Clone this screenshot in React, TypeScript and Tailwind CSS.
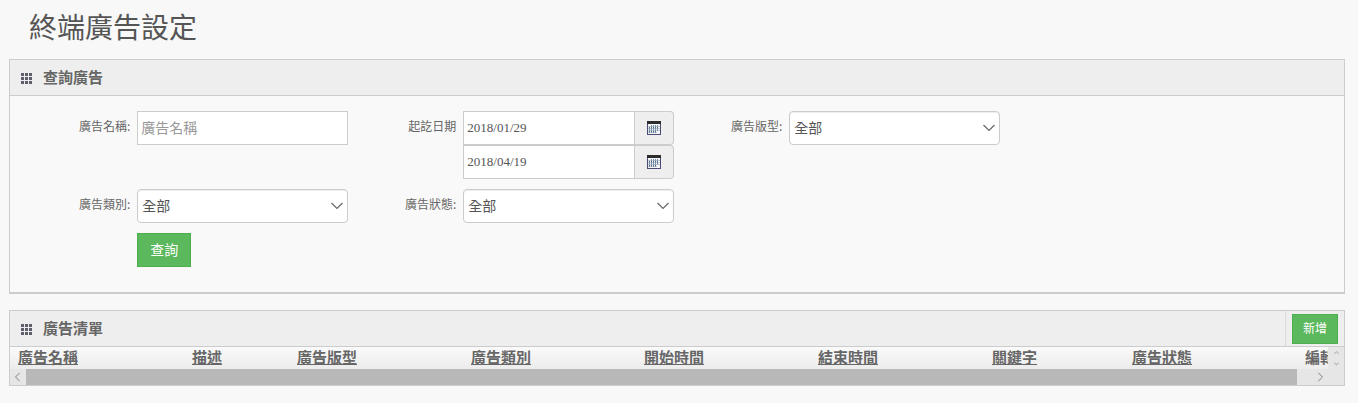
import type { ReactNode } from "react";

const columns = [
  { label: "廣告名稱", width: "w-[174px]", sortable: true },
  { label: "描述", width: "w-[105px]", sortable: true },
  { label: "廣告版型", width: "w-[174px]", sortable: true },
  { label: "廣告類別", width: "w-[173px]", sortable: true },
  { label: "開始時間", width: "w-[174px]", sortable: true },
  { label: "結束時間", width: "w-[174px]", sortable: true },
  { label: "關鍵字", width: "w-[140px]", sortable: true },
  { label: "廣告狀態", width: "w-[173px]", sortable: true },
  { label: "編輯", width: "w-[47px]", sortable: false },
];

function GridIcon() {
  return (
    <svg width="12" height="12" viewBox="0 0 12 12" shapeRendering="crispEdges" aria-hidden="true">
      {[1, 5, 9].map((y) =>
        [0, 4, 8].map((x) => <rect key={`${x}-${y}`} x={x} y={y} width="3" height="3" fill="#5f5f6b" />)
      )}
    </svg>
  );
}

function CalendarIcon() {
  return (
    <svg width="14" height="14" viewBox="0 0 14 14" shapeRendering="crispEdges" aria-hidden="true">
      <rect width="14" height="14" fill="#4b4b78" />
      <rect width="14" height="3" fill="#2b2b2b" />
      <rect x="1" y="3" width="12" height="10" fill="#f4f6f8" />
      {[4, 6, 8, 10].map((y) =>
        [2, 4, 6, 8, 10].map((x) =>
          (y === 4 && x === 2) || (y === 10 && x === 10) ? null : (
            <rect key={`${x}-${y}`} x={x} y={y} width="1" height="2" fill={y % 4 === 0 ? "#6f8fb0" : "#54677f"} />
          )
        )
      )}
      <path d="M1 5.5h12M1 7.5h12M1 9.5h12M1 11.5h9" stroke="#9aa9ba" strokeWidth="1" opacity="0.6" />
    </svg>
  );
}

function Chevron({ className, d, size = 12 }: { className?: string; d: string; size?: number }) {
  return (
    <svg
      className={className}
      width={size}
      height={size}
      viewBox="0 0 12 12"
      fill="none"
      stroke="currentColor"
      strokeWidth={size < 8 ? 3 : 1.2}
      aria-hidden="true"
    >
      <path d={d} />
    </svg>
  );
}

function Panel({ title, action, children, className }: { title: string; action?: ReactNode; children: ReactNode; className: string }) {
  return (
    <section className={`border border-[#cccccc] bg-[#f9f9f9] ${className}`}>
      <div className="flex h-9 items-stretch justify-between border-b border-[#cccccc] bg-[#eeeeee]">
        <div className="flex items-center gap-[10px] pl-[11px]">
          <GridIcon />
          <h2 className="pb-[2px] text-[15px] leading-5 font-bold text-[#666666]">{title}</h2>
        </div>
        {action}
      </div>
      {children}
    </section>
  );
}

function Field({ id, label, children }: { id: string; label: string; children: ReactNode }) {
  return (
    <div className="grid grid-cols-[1fr_2fr] gap-[7px] pr-[3px]">
      <label htmlFor={id} className="pt-[6px] text-right text-xs leading-[18px] whitespace-nowrap">
        {label}
      </label>
      <div>{children}</div>
    </div>
  );
}

function SelectAll({ id }: { id: string }) {
  return (
    <div className="relative">
      <select
        id={id}
        className="h-[34px] w-full appearance-none rounded-[4px] border border-[#cccccc] bg-white px-1 pb-[2px] text-sm text-[#555555] shadow-[inset_0_1px_1px_rgba(0,0,0,0.075)]"
      >
        <option>全部</option>
      </select>
      <Chevron className="pointer-events-none absolute top-[11px] right-[5px]" d="M.5 3L6 8.5 11.5 3" />
    </div>
  );
}

function DateInput({ id, label, value }: { id: string; label: string; value: string }) {
  return (
    <div className="flex h-[34px]">
      <input
        id={id}
        type="text"
        aria-label={label}
        defaultValue={value}
        className="w-full min-w-0 flex-1 border border-[#cccccc] bg-white px-[3px] font-['Liberation_Serif','Noto_Sans_CJK_TC',serif] text-[13px] text-[#555555]"
      />
      <button
        type="button"
        aria-label={label}
        className="flex w-[39px] items-center justify-center rounded-r-[4px] border border-l-0 border-[#cccccc] bg-[#eeeeee]"
      >
        <CalendarIcon />
      </button>
    </div>
  );
}

export default function App() {
  return (
    <main className="min-h-screen bg-[#f8f8f8] pr-[13px] pb-4 pl-[9px] font-['Noto_Sans_CJK_TC',sans-serif] text-[#666666]">
      <h1 className="pt-[6px] pb-[13px] pl-5 text-[28px] leading-10 font-normal text-[#555555]">終端廣告設定</h1>

      <Panel title="查詢廣告" className="border-b-2">
        <form className="px-[15px] pt-[15px] pb-[25px]">
          <div className="grid grid-cols-4 gap-y-[10px]">
            <Field id="ad-name" label="廣告名稱:">
              <input
                id="ad-name"
                type="text"
                placeholder="廣告名稱"
                className="h-[34px] w-full border border-[#cccccc] bg-white px-[3px] pb-[2px] text-sm text-[#555555] placeholder:text-[#999999]"
              />
            </Field>
            <Field id="date-start" label="起訖日期">
              <DateInput id="date-start" label="起始日期" value="2018/01/29" />
              <DateInput id="date-end" label="結束日期" value="2018/04/19" />
            </Field>
            <Field id="ad-layout" label="廣告版型:">
              <SelectAll id="ad-layout" />
            </Field>
            <div />
            <Field id="ad-type" label="廣告類別:">
              <SelectAll id="ad-type" />
            </Field>
            <Field id="ad-status" label="廣告狀態:">
              <SelectAll id="ad-status" />
            </Field>
          </div>
          <div className="mt-[10px] grid grid-cols-4">
            <div className="grid grid-cols-[1fr_2fr] gap-[7px] pr-[3px]">
              <button
                type="button"
                className="col-start-2 h-[34px] w-[54px] border border-[#4cae4c] bg-[#5cb85c] pb-[2px] text-sm text-white"
              >
                查詢
              </button>
            </div>
          </div>
        </form>
      </Panel>

      <Panel
        title="廣告清單"
        className="mt-4"
        action={
          <div className="flex items-center border-l border-[#dadada] px-[6px]">
            <button type="button" className="h-[30px] w-[46px] border border-[#4cae4c] bg-[#5cb85c] pb-[2px] text-xs text-white">
              新增
            </button>
          </div>
        }
      >
        <div className="flex">
          <div className="min-w-0 flex-1 overflow-hidden bg-linear-to-b from-[#fafafa] to-[#ececec]">
            <table className="w-[1334px] table-fixed text-left">
              <thead>
                <tr>
                  {columns.map((col) => (
                    <th key={col.label} className={`pb-[2px] pl-2 text-[15px] leading-5 font-bold whitespace-nowrap ${col.width}`}>
                      {col.sortable ? (
                        <a href="#" className="underline underline-offset-1">
                          {col.label}
                        </a>
                      ) : (
                        col.label
                      )}
                    </th>
                  ))}
                </tr>
              </thead>
            </table>
          </div>
          <div className="flex w-4 flex-col items-center justify-between bg-[#e6e6e6] py-[3px] text-[#bdbdbd]">
            <Chevron size={5} d="M1 9L6 4l5 5" />
            <Chevron size={5} d="M1 4l5 5 5-5" />
          </div>
        </div>
        <div className="flex h-4 bg-[#e6e6e6] pr-4 text-[#808080]">
          <button type="button" aria-label="向左捲動" className="flex w-4 items-center justify-center">
            <Chevron size={10} d="M8 1L3 6l5 5" />
          </button>
          <div className="flex-1 pr-[15px]">
            <div className="h-full bg-[#b8b8b8]" />
          </div>
          <button type="button" aria-label="向右捲動" className="flex w-4 items-center justify-center">
            <Chevron size={10} d="M4 1l5 5-5 5" />
          </button>
        </div>
      </Panel>
    </main>
  );
}
